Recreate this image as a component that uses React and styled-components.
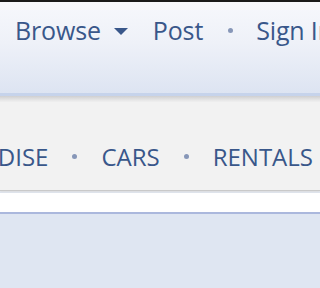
import React from 'react';
import styled, { createGlobalStyle } from 'styled-components';

const GlobalStyle = createGlobalStyle`
  html, body {
    margin: 0;
    padding: 0;
    background: #dfe6f2;
    font-family: "Open Sans", "Noto Sans", sans-serif;
    overflow: hidden;
  }
`;

const Page = styled.div`
  width: 100%;
  height: 100vh;
  overflow: hidden;
  display: flex;
  flex-direction: column;
`;

const TopBar = styled.header`
  height: 91px;
  border-top: 2px solid #1a1a1a;
  border-bottom: 3px solid #c6d3eb;
  background: linear-gradient(#f7f8fc 0%, #eef1f8 45%, #dde4f2 100%);
  box-sizing: content-box;
`;

const TopNav = styled.nav`
  display: flex;
  align-items: center;
  gap: 25px;
  padding: 11px 0 0 15px;
  white-space: nowrap;
`;

const TopLink = styled.a`
  display: flex;
  align-items: center;
  gap: 13px;
  font-size: 25px;
  letter-spacing: -0.15px;
  color: #39578a;
  text-decoration: none;
  line-height: 34px;
`;

const Caret = styled.span`
  width: 0;
  height: 0;
  border-left: 7px solid transparent;
  border-right: 7px solid transparent;
  border-top: 7px solid #39578a;
  margin-top: 2px;
`;

const Dot = styled.span`
  flex: none;
  width: 5px;
  height: 5px;
  border-radius: 50%;
  background: #8797b8;
`;

const SignInDot = styled(Dot)`
  margin-right: -2px;
`;

const Shadow = styled.div`
  height: 6px;
  background: linear-gradient(#cfcfd1, #f1f1f1);
`;

const CategoryBar = styled.div`
  height: 88px;
  background: #f2f2f2;
  border-bottom: 1px solid #c9c9c9;
  box-shadow: 0 1px 2px #dcdcdc;
  display: flex;
  align-items: center;
  overflow: hidden;
`;

const CategoryList = styled.ul`
  display: flex;
  align-items: center;
  gap: 24px;
  margin: 21px 0 0 -118px;
  padding: 0;
  list-style: none;
  white-space: nowrap;
`;

const Category = styled.li`
  font-size: 24px;
  color: #39578a;
  line-height: 30px;
`;

const WhiteStrip = styled.div`
  height: 19px;
  margin-top: 2px;
  background: #ffffff;
  border-bottom: 2px solid #abb8dd;
`;

const Body = styled.div`
  flex: 1;
  background: #dfe6f2;
`;

const categories = ['MERCHANDISE', 'CARS', 'RENTALS'];

export default function App() {
  return (
    <Page>
      <GlobalStyle />
      <TopBar>
        <TopNav>
          <TopLink href="#">Browse <Caret /></TopLink>
          <TopLink href="#">Post</TopLink>
          <SignInDot />
          <TopLink href="#">Sign In</TopLink>
        </TopNav>
      </TopBar>
      <Shadow />
      <CategoryBar>
        <CategoryList>
          {categories.map((c, i) => (
            <React.Fragment key={c}>
              {i > 0 && <Dot />}
              <Category>{c}</Category>
            </React.Fragment>
          ))}
        </CategoryList>
      </CategoryBar>
      <WhiteStrip />
      <Body />
    </Page>
  );
}
